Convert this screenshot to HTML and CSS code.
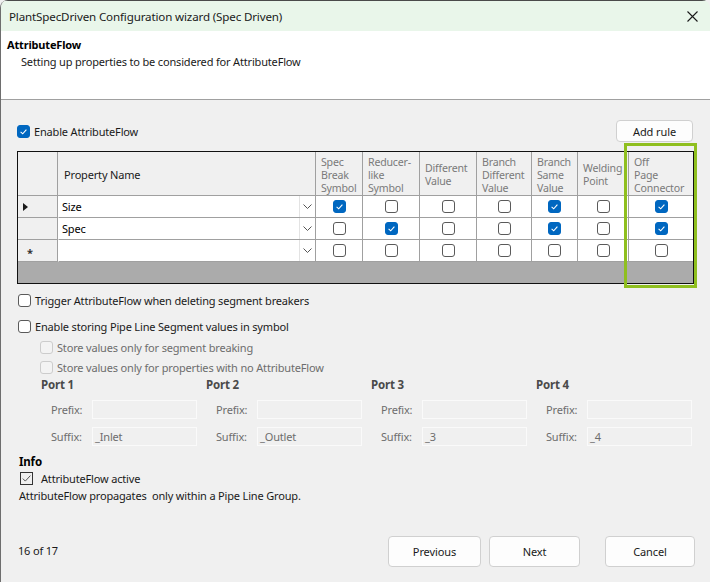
FILE: index.html
```html
<!DOCTYPE html>
<html lang="en">
<head>
<meta charset="utf-8">
<title>PlantSpecDriven Configuration wizard</title>
<link rel="stylesheet" href="styles.css">
</head>
<body>
<div class="window">
  <div class="titlebar">
    <span class="title">PlantSpecDriven Configuration wizard (Spec Driven)</span>
    <svg class="close" width="11" height="11" viewBox="0 0 11 11"><path d="M0.5 0.5 L10.5 10.5 M10.5 0.5 L0.5 10.5" stroke="#1a1a1a" stroke-width="1.1" fill="none"/></svg>
  </div>
  <div class="header">
    <div class="h-title">AttributeFlow</div>
    <div class="h-sub">Setting up properties to be considered for AttributeFlow</div>
  </div>
  <div class="content">
    <div class="toprow">
      <label class="chk"><span class="cb on"><svg viewBox="0 0 13 13"><path d="M3.6 6.9 L5.7 8.8 L9.4 4.6" stroke="#fff" stroke-width="1.1" fill="none"/></svg></span><span>Enable AttributeFlow</span></label>
      <button class="btn addrule">Add rule</button>
    </div>

    <div class="grid-wrap">
      <div class="grid">
        <div class="hc rh"></div>
        <div class="hc prop">Property Name</div>
        <div class="hc gray"><div class="hl"><span>Spec</span><span>Break</span><span>Symbol</span></div></div>
        <div class="hc gray"><div class="hl"><span>Reducer-</span><span>like</span><span>Symbol</span></div></div>
        <div class="hc gray"><div class="hl"><span>Different</span><span>Value</span></div></div>
        <div class="hc gray"><div class="hl"><span>Branch</span><span>Different</span><span>Value</span></div></div>
        <div class="hc gray"><div class="hl"><span>Branch</span><span>Same</span><span>Value</span></div></div>
        <div class="hc gray"><div class="hl"><span>Welding</span><span>Point</span></div></div>
        <div class="hc gray last"><div class="hl"><span>Off</span><span>Page</span><span>Connector</span></div></div>

        <div class="c rh"><span class="tri"></span></div>
        <div class="c combo"><span class="ctext">Size</span><span class="arrow"><svg width="9" height="5" viewBox="0 0 9 5"><path d="M0.5 0.5 L4.5 4.5 L8.5 0.5" stroke="#555" fill="none"/></svg></span></div>
        <div class="c"><span class="cb on"><svg viewBox="0 0 13 13"><path d="M3.6 6.9 L5.7 8.8 L9.4 4.6" stroke="#fff" stroke-width="1.1" fill="none"/></svg></span></div>
        <div class="c"><span class="cb"></span></div>
        <div class="c"><span class="cb"></span></div>
        <div class="c"><span class="cb"></span></div>
        <div class="c"><span class="cb on"><svg viewBox="0 0 13 13"><path d="M3.6 6.9 L5.7 8.8 L9.4 4.6" stroke="#fff" stroke-width="1.1" fill="none"/></svg></span></div>
        <div class="c"><span class="cb"></span></div>
        <div class="c last"><span class="cb on"><svg viewBox="0 0 13 13"><path d="M3.6 6.9 L5.7 8.8 L9.4 4.6" stroke="#fff" stroke-width="1.1" fill="none"/></svg></span></div>

        <div class="c rh"></div>
        <div class="c combo"><span class="ctext">Spec</span><span class="arrow"><svg width="9" height="5" viewBox="0 0 9 5"><path d="M0.5 0.5 L4.5 4.5 L8.5 0.5" stroke="#555" fill="none"/></svg></span></div>
        <div class="c"><span class="cb"></span></div>
        <div class="c"><span class="cb on"><svg viewBox="0 0 13 13"><path d="M3.6 6.9 L5.7 8.8 L9.4 4.6" stroke="#fff" stroke-width="1.1" fill="none"/></svg></span></div>
        <div class="c"><span class="cb"></span></div>
        <div class="c"><span class="cb"></span></div>
        <div class="c"><span class="cb on"><svg viewBox="0 0 13 13"><path d="M3.6 6.9 L5.7 8.8 L9.4 4.6" stroke="#fff" stroke-width="1.1" fill="none"/></svg></span></div>
        <div class="c"><span class="cb"></span></div>
        <div class="c last"><span class="cb on"><svg viewBox="0 0 13 13"><path d="M3.6 6.9 L5.7 8.8 L9.4 4.6" stroke="#fff" stroke-width="1.1" fill="none"/></svg></span></div>

        <div class="c rh"><span class="star">*</span></div>
        <div class="c combo"><span class="ctext"></span><span class="arrow"><svg width="9" height="5" viewBox="0 0 9 5"><path d="M0.5 0.5 L4.5 4.5 L8.5 0.5" stroke="#555" fill="none"/></svg></span></div>
        <div class="c"><span class="cb"></span></div>
        <div class="c"><span class="cb"></span></div>
        <div class="c"><span class="cb"></span></div>
        <div class="c"><span class="cb"></span></div>
        <div class="c"><span class="cb"></span></div>
        <div class="c"><span class="cb"></span></div>
        <div class="c last"><span class="cb"></span></div>

        <div class="filler"></div>
      </div>
      <div class="highlight"></div>
    </div>

    <label class="chk opt1"><span class="cb"></span><span>Trigger AttributeFlow when deleting segment breakers</span></label>
    <label class="chk opt2"><span class="cb"></span><span>Enable storing Pipe Line Segment values in symbol</span></label>
    <label class="chk sub dis opt3"><span class="cb"></span><span>Store values only for segment breaking</span></label>
    <label class="chk sub dis opt4"><span class="cb"></span><span>Store values only for properties with no AttributeFlow</span></label>

    <div class="ports">
      <div class="port">
        <div class="port-title">Port 1</div>
        <div class="field"><span class="flabel">Prefix:</span><span class="finput"></span></div>
        <div class="field"><span class="flabel">Suffix:</span><span class="finput">_Inlet</span></div>
      </div>
      <div class="port">
        <div class="port-title">Port 2</div>
        <div class="field"><span class="flabel">Prefix:</span><span class="finput"></span></div>
        <div class="field"><span class="flabel">Suffix:</span><span class="finput">_Outlet</span></div>
      </div>
      <div class="port">
        <div class="port-title">Port 3</div>
        <div class="field"><span class="flabel">Prefix:</span><span class="finput"></span></div>
        <div class="field"><span class="flabel">Suffix:</span><span class="finput">_3</span></div>
      </div>
      <div class="port">
        <div class="port-title">Port 4</div>
        <div class="field"><span class="flabel">Prefix:</span><span class="finput"></span></div>
        <div class="field"><span class="flabel">Suffix:</span><span class="finput">_4</span></div>
      </div>
    </div>

    <div class="info">
      <div class="info-title">Info</div>
      <div class="info-chk"><span class="box"><svg width="11" height="11" viewBox="0 0 11 11"><path d="M1.8 5.6 L4.3 8.1 L9.4 2.6" stroke="#555" stroke-width="1" fill="none"/></svg></span><span>AttributeFlow active</span></div>
      <div class="info-text">AttributeFlow propagates &nbsp;only within a Pipe Line Group.</div>
    </div>

    <div class="footer">
      <span class="pages">16 of 17</span>
      <div class="navbtns">
        <button class="btn nav prev">Previous</button>
        <button class="btn nav next">Next</button>
        <button class="btn nav cancel">Cancel</button>
      </div>
    </div>
  </div>
</div>
</body>
</html>
```

FILE: styles.css
```css
* { box-sizing: border-box; }
html, body { margin: 0; padding: 0; }
body {
  width: 710px;
  height: 582px;
  overflow: hidden;
  background: #f0f0f0;
  font-family: "Noto Sans", "Open Sans", sans-serif;
  font-size: 11px;
  letter-spacing: -0.17px;
  color: #1a1a1a;
}
.window {
  width: 710px;
  height: 582px;
  background: #f0f0f0;
  border-left: 1px solid #6e6e6e;
  border-radius: 8px 8px 0 0;
  overflow: hidden;
  display: flex;
  flex-direction: column;
}
.titlebar {
  height: 31px;
  background: #e9f6ea;
  border-top: 1px solid #4a4a4a;
  display: flex;
  align-items: center;
  justify-content: space-between;
  padding: 0 12px 0 8px;
  flex: none;
}
.title { font-size: 11.6px; color: #1a1a1a; letter-spacing: -0.15px; }
.close { display: block; }
.header {
  height: 69px;
  background: #fff;
  border-bottom: 1px solid #a0a0a0;
  padding: 6px 0 0 6px;
  flex: none;
}
.h-title { font-weight: 700; font-size: 11px; line-height: 15px; color: #000; }
.h-sub { margin: 2px 0 0 14px; line-height: 15px; color: #1a1a1a; }

.content { padding: 0 17px 0 16px; flex: 1; display: flex; flex-direction: column; }

.toprow {
  margin-top: 20px;
  height: 22px;
  display: flex;
  align-items: center;
  justify-content: space-between;
}
.chk { display: flex; align-items: center; gap: 4px; height: 16px; color: #1a1a1a; }
.cb {
  width: 13px; height: 13px;
  border: 1px solid #5a5a5a;
  border-radius: 3px;
  background: #fff;
  display: inline-block;
  flex: none;
}
.cb svg { width: 13px; height: 13px; display: block; margin: -1px; }
.cb.on { background: #0067c0; border-color: #0067c0; }
.btn {
  font-family: inherit;
  font-size: 11px;
  letter-spacing: -0.1px;
  color: #1a1a1a;
  background: #fdfdfd;
  border: 1px solid #d0d0d0;
  border-radius: 4px;
  padding: 0;
}
.addrule { width: 77px; height: 22px; }

.grid-wrap { position: relative; margin-top: 9px; width: 677px; }
.grid {
  display: grid;
  grid-template-columns: 40px 258px 47px 57px 57px 55px 46px 51px 64px;
  border: 1px solid #111;
  background: #f0f0f0;
}
.hc {
  height: 44px;
  border-right: 1px solid #a0a0a0;
  border-bottom: 1px solid #a0a0a0;
  display: flex;
  align-items: center;
  padding-left: 6px;
  padding-top: 3px;
  white-space: nowrap;
}
.hl { display: flex; flex-direction: column; }
.hl span { display: block; height: 13px; line-height: 13px; font-size: 10.6px; letter-spacing: -0.2px; }
.hc.gray { color: #7a7a7a; padding-left: 5px; }
.hc.prop { color: #1a1a1a; padding-top: 1px; }
.last { border-right: none !important; }
.c {
  height: 22px;
  border-right: 1px solid #a0a0a0;
  border-bottom: 1px solid #a0a0a0;
  background: #fff;
  display: flex;
  align-items: center;
  justify-content: center;
}
.c.rh { background: #f0f0f0; justify-content: flex-start; padding-left: 5px; }
.tri {
  width: 0; height: 0;
  border-top: 4.5px solid transparent;
  border-bottom: 4.5px solid transparent;
  border-left: 5px solid #1a1a1a;
}
.star { color: #333; font-size: 11px; font-weight: 700; margin-left: 4px; margin-top: 3px; }
.c.combo { justify-content: space-between; padding-left: 3px; border-left: 1px solid #fff; }
.ctext { color: #000; }
.arrow {
  width: 16px; height: 100%;
  border-left: 1px solid #e3e3e3;
  display: flex; align-items: center; justify-content: center;
}
.arrow svg { display: block; }
.filler { grid-column: 1 / -1; height: 21px; background: #ababab; }
.highlight {
  position: absolute;
  left: 607px;
  top: -8px;
  width: 73px;
  height: 145px;
  border: 3px solid #8fbf1f;
}

.opt1 { margin-top: 8px; margin-left: 1px; }
.opt2 { margin-top: 10px; margin-left: 1px; }
.opt3 { margin-top: 5px; }
.opt4 { margin-top: 4px; }
.chk.sub { margin-left: 23px; }
.chk.dis { color: #6d6d6d; }
.chk.dis .cb { border-color: #cccccc; background: #f3f3f3; }

.ports {
  margin-top: 3px;
  margin-left: 24px;
  display: grid;
  grid-template-columns: repeat(4, 165px);
}
.port-title { font-weight: 700; color: #4a4a4a; height: 14px; line-height: 14px; font-size: 11.5px; }
.field { display: flex; align-items: center; height: 19px; margin-top: 8px; }
.field + .field { margin-top: 8px; }
.flabel { width: 51px; padding-left: 10px; color: #6d6d6d; }
.finput {
  width: 105px; height: 19px;
  border: 1px solid #fafafa;
  background: #f0f0f0;
  color: #6d6d6d;
  padding-left: 2px;
  line-height: 17px;
}

.info { margin-top: 8px; padding-left: 2px; }
.info-title { font-weight: 700; color: #000; line-height: 16px; font-size: 11.5px; }
.info-chk { display: flex; align-items: center; height: 16px; margin-top: 0; gap: 8px; padding-left: 1px; }
.box {
  width: 13px; height: 13px;
  border: 1px solid #333;
  background: #f0f0f0;
  display: flex; align-items: center; justify-content: center;
}
.info-text { line-height: 16px; margin-top: 2px; }

.footer {
  margin-top: 32px;
  display: flex;
  align-items: center;
  justify-content: space-between;
  height: 31px;
}
.pages { margin-top: -2px; padding-left: 1px; }
.navbtns { display: flex; }
.btn.nav { height: 31px; }
.prev { width: 93px; }
.next { width: 91px; margin-left: 8px; }
.cancel { width: 90px; margin-left: 25px; margin-right: -2px; }
```
